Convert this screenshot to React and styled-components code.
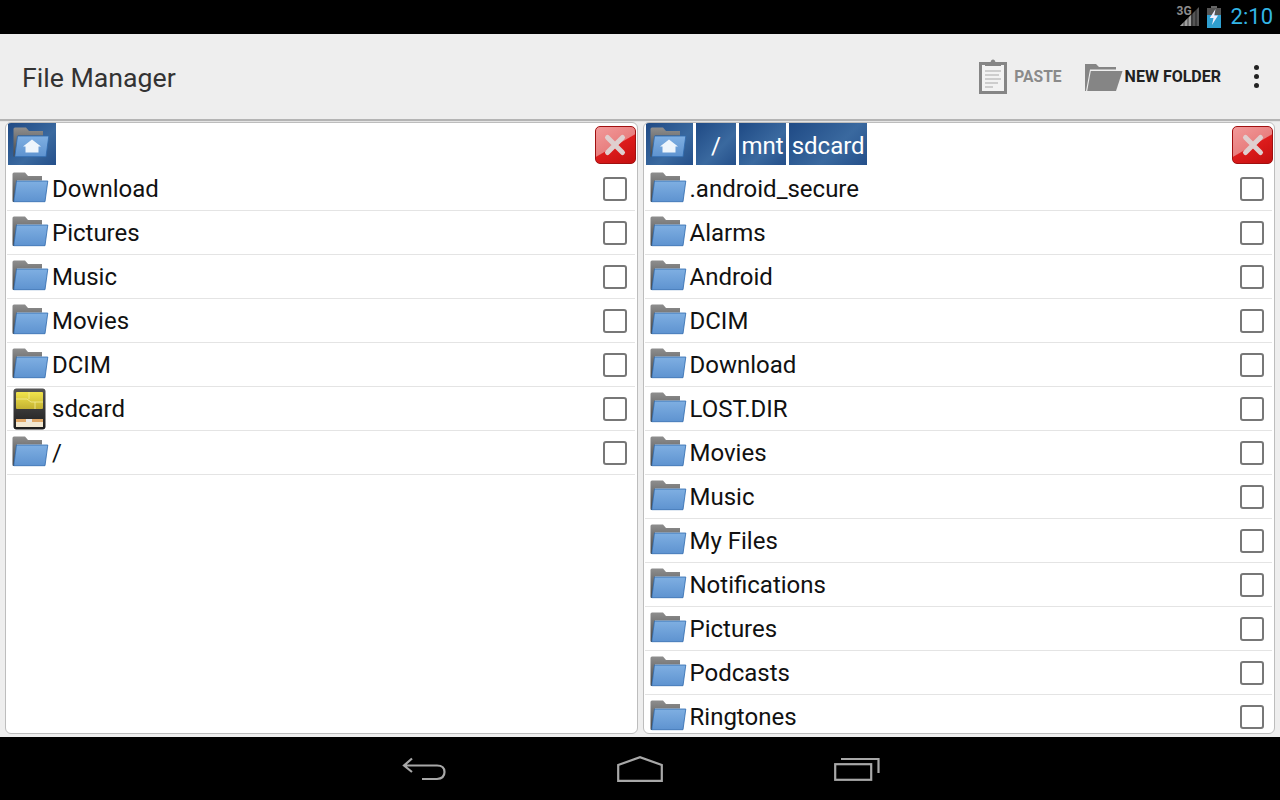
import styled, { createGlobalStyle } from "styled-components";

const leftItems = [
  { name: "Download" },
  { name: "Pictures" },
  { name: "Music" },
  { name: "Movies" },
  { name: "DCIM" },
  { name: "sdcard", card: true },
  { name: "/" },
];

const rightItems = [
  ".android_secure",
  "Alarms",
  "Android",
  "DCIM",
  "Download",
  "LOST.DIR",
  "Movies",
  "Music",
  "My Files",
  "Notifications",
  "Pictures",
  "Podcasts",
  "Ringtones",
].map((name) => ({ name }));

const FolderIcon = ({ home }) => (
  <svg width="38" height="34" viewBox="0 1.5 38 34">
    <defs>
      <linearGradient id="backGrad" x1="0" y1="0" x2="0" y2="1">
        <stop offset="0" stopColor="#8e8e8e" />
        <stop offset="1" stopColor="#444" />
      </linearGradient>
      <linearGradient id="frontGrad" x1="0" y1="0" x2="0" y2="1">
        <stop offset="0" stopColor="#7fafe2" />
        <stop offset="1" stopColor="#5e93d0" />
      </linearGradient>
    </defs>
    <path
      d="M0.5 3.5Q0.5 2 2 2H13L16 5.5H30V10H5L2 31.5H1.5Q0.5 31.5 0.5 30Z"
      fill="url(#backGrad)"
    />
    <path
      d="M4.5 10.5H35.8L33 31.2H1.8Z"
      fill="url(#frontGrad)"
      stroke="#2f69ad"
      strokeWidth="0.8"
    />
    {home && <path d="M19 14L28 21H25.5V27H12.5V21H10Z" fill="#eef5fc" />}
  </svg>
);

const CardIcon = () => (
  <svg width="35" height="42" viewBox="-1 0 35 42">
    <defs>
      <linearGradient id="cardBody" x1="0" y1="0" x2="0" y2="1">
        <stop offset="0" stopColor="#555" />
        <stop offset="1" stopColor="#1c1c1c" />
      </linearGradient>
      <linearGradient id="cardChip" x1="0" y1="0" x2="0" y2="1">
        <stop offset="0" stopColor="#f1e44c" />
        <stop offset="1" stopColor="#c4b232" />
      </linearGradient>
    </defs>
    <rect x="0.5" y="0.5" width="32" height="41" rx="3" fill="url(#cardBody)" />
    <rect x="3" y="4" width="27" height="17" rx="1" fill="url(#cardChip)" />
    <path d="M3 11H14L18 14H30M16 4V11M22 14V21" stroke="#f5ee9a" strokeWidth="0.8" fill="none" />
    <rect x="3" y="31" width="27" height="3" fill="#e0a868" />
    <rect x="3" y="34" width="27" height="5" fill="#f2e8d2" />
    <rect x="13" y="31" width="6" height="3" fill="#e9e9e9" />
  </svg>
);

const CloseButton = () => (
  <CloseBox>
    <svg width="26" height="26" viewBox="0 0 26 26">
      <path
        d="M5.5 5.5L20.5 20.5M20.5 5.5L5.5 20.5"
        stroke="#dfcfcf"
        strokeWidth="5"
        strokeLinecap="round"
      />
    </svg>
  </CloseBox>
);

const FileRow = ({ item }) => (
  <Row>
    <RowIcon>{item.card ? <CardIcon /> : <FolderIcon />}</RowIcon>
    <RowName>{item.name}</RowName>
    <Check />
  </Row>
);

const Panel = ({ crumbs, items }) => (
  <PanelBox>
    <Breadcrumbs>
      <HomeCrumb>
        <FolderIcon home />
      </HomeCrumb>
      {crumbs.map((c) => (
        <Crumb key={c} $wide={c === "/"}>
          {c}
        </Crumb>
      ))}
      <CloseButton />
    </Breadcrumbs>
    {items.map((item) => (
      <FileRow key={item.name} item={item} />
    ))}
  </PanelBox>
);

export default function App() {
  return (
    <>
      <GlobalStyle />
      <Screen>
        <StatusBar>
          <NetworkLabel>3G</NetworkLabel>
          <SignalIcon width="20" height="21" viewBox="0 0 20 21">
            <path d="M0 20L19 1V20Z" fill="#555" />
            <path d="M0 20L11 9V20Z" fill="#a0a0a0" />
            <path d="M4 20V15M8 20V11M12 20V7M16 20V3" stroke="#000" strokeWidth="0.6" />
          </SignalIcon>
          <svg width="16" height="22" viewBox="0 0 16 22">
            <rect x="5" y="0" width="6" height="3" fill="#666" />
            <rect x="1" y="2" width="14" height="8" fill="#555" />
            <rect x="1" y="9" width="14" height="13" fill="#2f9fd0" />
            <path d="M9.5 3L3.8 12H7.5L6 19L12 9.5H8.3Z" fill="#eef" />
          </svg>
          <Clock>2:10</Clock>
        </StatusBar>
        <ActionBar>
          <Title>File Manager</Title>
          <Action $dim>
            <svg width="28" height="35" viewBox="0 0 28 35">
              <rect x="1.5" y="4.5" width="25" height="29" fill="#f2f2f2" stroke="#858585" strokeWidth="3" />
              <path d="M6 7V3.5H11.5Q12 0.5 14 0.5Q16 0.5 16.5 3.5H22V7Z" fill="#858585" />
              <path d="M6 12H22M6 16H20M6 20H22M6 24H19M6 28H14" stroke="#a8a8a8" strokeWidth="1.2" />
            </svg>
            <ActionLabel $dim>PASTE</ActionLabel>
          </Action>
          <Action>
            <svg width="39" height="28" viewBox="0 0 39 28">
              <path d="M1 28V1H12L15 4H32V6.5H6L2 28Z" fill="#858585" />
              <path d="M6.8 8H38.5L32 28H3.2Z" fill="#858585" />
            </svg>
            <ActionLabel>NEW FOLDER</ActionLabel>
          </Action>
          <MoreDots>
            <i />
            <i />
            <i />
          </MoreDots>
        </ActionBar>
        <Divider />
        <Panels>
          <Panel crumbs={[]} items={leftItems} />
          <Panel crumbs={["/", "mnt", "sdcard"]} items={rightItems} />
        </Panels>
        <NavBar>
          <svg width="44" height="24" viewBox="0 0 44 24">
            <path
              d="M10 1.5L2 8.5L10 15M2.5 8.5H35Q42.5 8.5 42.5 15T35 22H20"
              fill="none"
              stroke="#a8a8a8"
              strokeWidth="2.2"
            />
          </svg>
          <svg width="46" height="26" viewBox="0 0 46 26">
            <path d="M1.2 9L23 1.2L44.8 9V24.8H1.2Z" fill="none" stroke="#a8a8a8" strokeWidth="2.2" />
          </svg>
          <svg width="46" height="24" viewBox="0 0 46 24">
            <rect x="1.2" y="7.2" width="36" height="15.6" fill="none" stroke="#a8a8a8" strokeWidth="2.2" />
            <path d="M7 2H44.5V16" fill="none" stroke="#a8a8a8" strokeWidth="2.2" />
          </svg>
        </NavBar>
      </Screen>
    </>
  );
}

const GlobalStyle = createGlobalStyle`
  html, body {
    margin: 0;
    padding: 0;
    background: #000;
  }
`;

const Screen = styled.div`
  width: 1280px;
  height: 800px;
  display: flex;
  flex-direction: column;
  overflow: hidden;
  font-family: Roboto, "Liberation Sans", sans-serif;
`;

const StatusBar = styled.div`
  height: 33px;
  background: #000;
  display: flex;
  align-items: center;
  justify-content: flex-end;
  padding-right: 7px;
  box-sizing: border-box;
`;

const NetworkLabel = styled.span`
  font-size: 12px;
  font-weight: 700;
  color: #8c8c8c;
  margin-right: -12px;
  margin-top: -11px;
`;

const SignalIcon = styled.svg`
  margin-right: 6px;
`;

const Clock = styled.span`
  font-size: 22px;
  color: #33b5e5;
  margin-left: 9px;
`;

const ActionBar = styled.div`
  height: 85px;
  margin-top: 1px;
  background: #eeeeee;
  display: flex;
  align-items: center;
  padding: 0 15px 0 22px;
`;

const Title = styled.div`
  flex: 1;
  font-size: 26.7px;
  color: #333;
  padding-top: 2px;
`;

const Action = styled.div`
  display: flex;
  align-items: center;
  gap: ${(p) => (p.$dim ? "7px" : "2px")};
  margin-right: ${(p) => (p.$dim ? "22px" : "27px")};
`;

const ActionLabel = styled.span`
  font-size: ${(p) => (p.$dim ? "15.6px" : "16px")};
  font-weight: 700;
  color: ${(p) => (p.$dim ? "#8a8a8a" : "#222")};
`;

const MoreDots = styled.div`
  display: flex;
  flex-direction: column;
  gap: 4px;
  padding: 0 6px;

  i {
    display: block;
    width: 5px;
    height: 5px;
    border-radius: 50%;
    background: #222;
  }
`;

const Divider = styled.div`
  height: 3px;
  background: #b4b4b4;
  border-bottom: 1px solid #e4e4e4;
  box-sizing: border-box;
`;

const Panels = styled.div`
  flex: 1;
  min-height: 0;
  background: #eeeeee;
  display: flex;
  gap: 5px;
  padding: 0 5px 3px;
`;

const PanelBox = styled.div`
  flex: 1;
  min-width: 0;
  background: #fff;
  border: 1px solid #bdbdbd;
  border-radius: 6px;
  overflow: hidden;
  padding: 0 2px 0 1px;
`;

const Breadcrumbs = styled.div`
  height: 44px;
  display: flex;
  align-items: flex-start;
  gap: 3px;
  padding-left: 1px;
  position: relative;
`;

const HomeCrumb = styled.div`
  width: 47.5px;
  height: 42px;
  background: linear-gradient(135deg, #1f4a85, #3a699f 60%, #244f8a);
  display: flex;
  align-items: center;
  justify-content: center;
`;

const Crumb = styled.div`
  height: 42px;
  box-sizing: content-box;
  height: 39px;
  padding: 3px 2.5px 0;
  min-width: ${(p) => (p.$wide ? "35px" : "0")};
  background: linear-gradient(135deg, #1f4a85, #3a699f 60%, #244f8a);
  color: #fff;
  font-size: 24px;
  display: flex;
  align-items: center;
  justify-content: center;
`;

const CloseBox = styled.div`
  position: absolute;
  right: -1px;
  top: 3px;
  width: 41px;
  height: 38px;
  box-sizing: border-box;
  border: 1px solid #a01010;
  border-radius: 5px;
  background: linear-gradient(150deg, #f29a9a 0%, #e87f7f 50%, #dd1c1c 52%, #c40f0f 100%);
  display: flex;
  align-items: center;
  justify-content: center;
`;

const Row = styled.div`
  height: 44px;
  box-sizing: border-box;
  border-bottom: 1px solid #e4e4e4;
  display: flex;
  align-items: center;
  padding-left: 4px;
`;

const RowIcon = styled.div`
  width: 40px;
  margin-left: 1px;
  height: 43px;
  display: flex;
  align-items: center;
  flex-shrink: 0;
`;

const RowName = styled.div`
  flex: 1;
  font-size: 24px;
  color: #111;
`;

const Check = styled.div`
  width: 24px;
  height: 24px;
  box-sizing: border-box;
  border: 2.5px solid #777;
  border-radius: 3px;
  background: #fff;
  margin-right: 8px;
`;

const NavBar = styled.div`
  height: 63px;
  background: #000;
  display: flex;
  align-items: center;
  justify-content: center;
  gap: 171px;
  padding-left: 1px;
`;
